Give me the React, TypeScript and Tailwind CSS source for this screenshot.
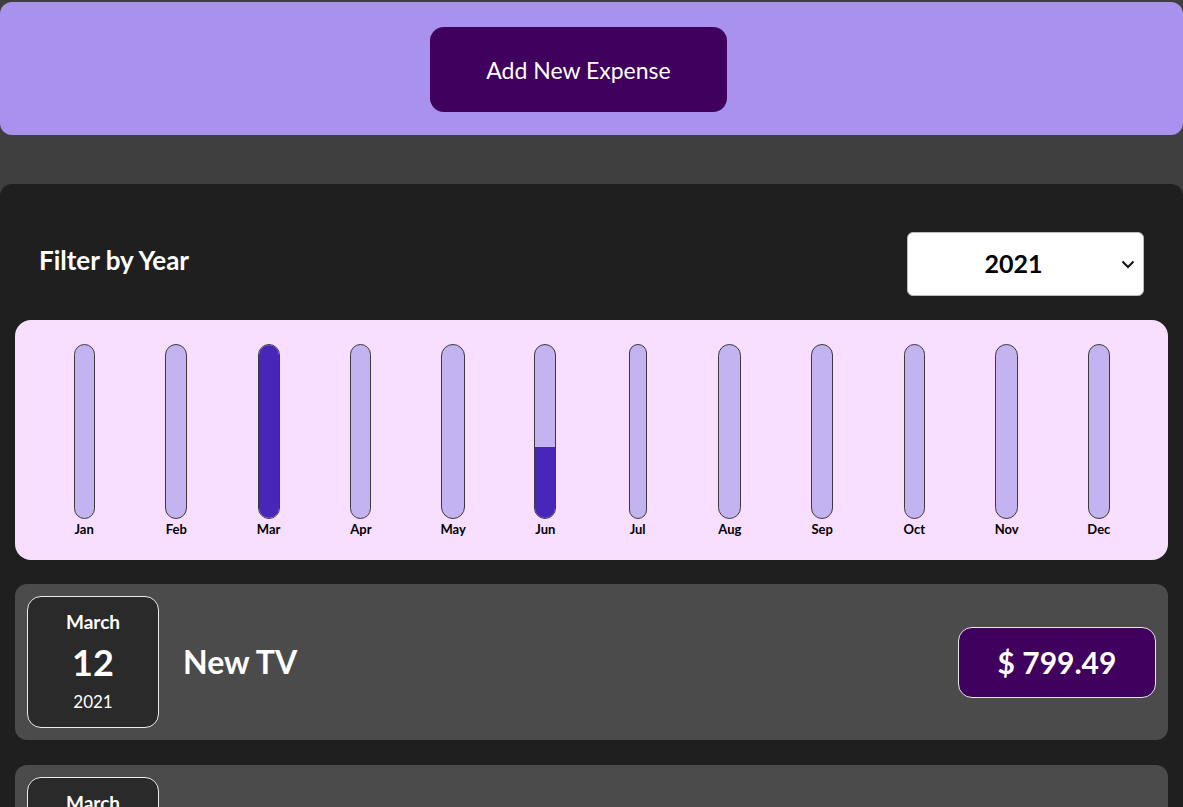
import { useState } from 'react';

const months = [
  { label: 'Jan', w: 21, fill: 0 },
  { label: 'Feb', w: 22, fill: 0 },
  { label: 'Mar', w: 22, fill: 100 },
  { label: 'Apr', w: 21, fill: 0 },
  { label: 'May', w: 24, fill: 0 },
  { label: 'Jun', w: 22, fill: 41 },
  { label: 'Jul', w: 18, fill: 0 },
  { label: 'Aug', w: 23, fill: 0 },
  { label: 'Sep', w: 22, fill: 0 },
  { label: 'Oct', w: 21, fill: 0 },
  { label: 'Nov', w: 23, fill: 0 },
  { label: 'Dec', w: 22, fill: 0 },
];

const expenses = [
  { id: 'e1', title: 'New TV', amount: 799.49, month: 'March', day: '12', year: '2021' },
  { id: 'e2', title: 'Car Insurance', amount: 294.67, month: 'March', day: '28', year: '2021' },
];

function ChartBar({ label, w, fill }: { label: string; w: number; fill: number }) {
  return (
    <div className="flex-1 flex flex-col items-center">
      <div
        className="h-[175px] border border-[#3b3b3b] rounded-xl bg-[#c3b4f1] flex flex-col justify-end overflow-hidden"
        style={{ width: w }}
      >
        <div className="bg-[#4826b9] w-full" style={{ height: `${fill}%` }}></div>
      </div>
      <div className="text-[13px] font-bold text-black mt-[1px]">{label}</div>
    </div>
  );
}

function ExpenseItem({ title, amount, month, day, year }: { title: string; amount: number; month: string; day: string; year: string }) {
  return (
    <li className="flex items-center bg-[#4b4b4b] rounded-xl p-3 mb-[25px]">
      <div className="w-[132px] h-[132px] shrink-0 flex flex-col items-center justify-center bg-[#2a2a2a] border border-[#ececec] rounded-[14px] text-white">
        <div className="text-[19px] font-bold leading-[26px]">{month}</div>
        <div className="text-[36px] font-bold leading-[52px] mt-[1px]">{day}</div>
        <div className="text-[17px] leading-[26px] mt-[1px]">{year}</div>
      </div>
      <div className="flex-1 flex items-center justify-between ml-6">
        <h2 className="text-[32px] font-bold text-white">{title}</h2>
        <div className="w-[198px] h-[71px] flex items-center justify-center bg-[#40005d] border border-[#e8e8e8] rounded-[14px] text-white text-[30px] font-bold">
          $ {amount}
        </div>
      </div>
    </li>
  );
}

export default function App() {
  const [year, setYear] = useState('2021');

  return (
    <div className="min-h-[807px] bg-[#3f3f3f] pt-[2px] font-['Lato','Liberation_Sans',sans-serif]">
      <div className="bg-[#a892ee] rounded-xl h-[133px] flex items-center justify-center">
        <button className="w-[297px] h-[85px] mt-[2px] mr-[26px] bg-[#40005d] rounded-[14px] text-white text-[23px] pt-[2px]">
          Add New Expense
        </button>
      </div>
      <div className="mt-[49px] bg-[#1f1f1f] rounded-xl px-[15px] pt-[48px]">
        <div className="flex items-center justify-between pl-6 pr-[24px] mb-[24px]">
          <label className="text-white text-[26px] font-bold -mt-[8px]">Filter by Year</label>
          <div className="relative w-[237px] h-[64px]">
            <select
              value={year}
              onChange={(e) => setYear(e.target.value)}
              className="appearance-none w-full h-full bg-white rounded-md border border-[#bbb] text-center pr-[24px] text-[25px] font-bold text-black"
            >
              <option value="2022">2022</option>
              <option value="2021">2021</option>
              <option value="2020">2020</option>
              <option value="2019">2019</option>
            </select>
            <svg className="absolute right-[9px] top-[28px] pointer-events-none" width="14" height="9" viewBox="0 0 14 9">
              <path d="M1.5 1.5 L7 7 L12.5 1.5" fill="none" stroke="#111" strokeWidth="2" />
            </svg>
          </div>
        </div>
        <div className="bg-[#f8dfff] rounded-2xl h-[240px] px-[23px] pt-[24px] flex">
          {months.map((m) => (
            <ChartBar key={m.label} label={m.label} w={m.w} fill={m.fill} />
          ))}
        </div>
        <ul className="mt-[24px]">
          {expenses.map((e) => (
            <ExpenseItem key={e.id} {...e} />
          ))}
        </ul>
      </div>
    </div>
  );
}
